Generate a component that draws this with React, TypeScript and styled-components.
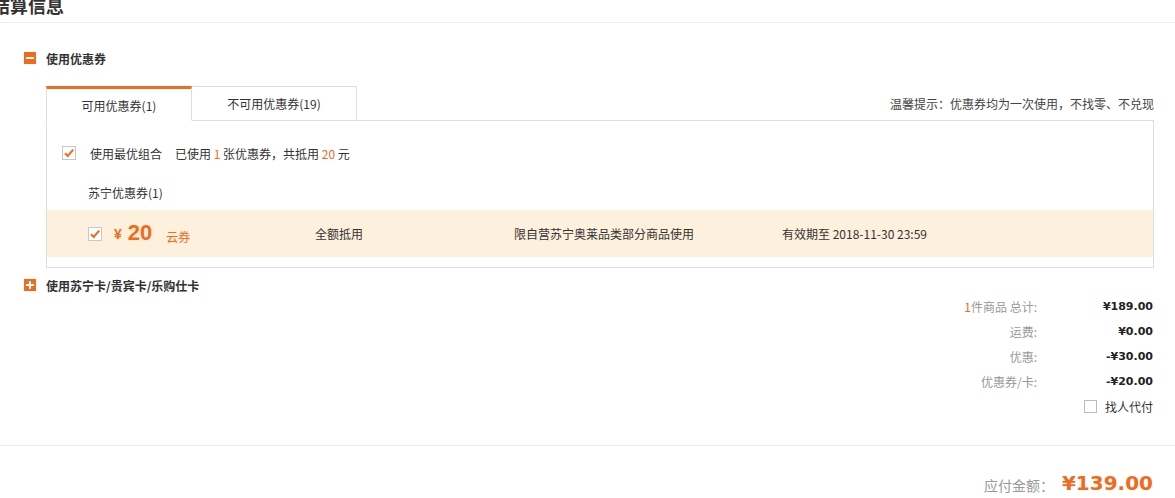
import React from "react";
import styled, { createGlobalStyle } from "styled-components";

const ORANGE = "#f26a1b";

const Global = createGlobalStyle`
  html, body { margin: 0; padding: 0; background: #fff; }
  body {
    font-family: "Noto Sans CJK SC", "Microsoft YaHei", "Noto Sans", sans-serif;
    font-size: 12px;
    color: #333;
  }
  * { box-sizing: border-box; }
`;

const Page = styled.div`
  width: 1175px;
  height: 498px;
  overflow: hidden;
  display: flex;
  flex-direction: column;
  & > * { flex-shrink: 0; }
`;

const Header = styled.div`
  height: 23px;
  border-bottom: 1px solid #ececec;
  overflow: hidden;
`;

const Title = styled.h2`
  margin: -7px 0 0 -8px;
  font-size: 18px;
  line-height: 24px;
  font-weight: 700;
  color: #333;
`;

const Section = styled.div`
  padding: 0 21px 0 24px;
  display: flex;
  flex-direction: column;
  & > * { flex-shrink: 0; }
`;

const Toggle = styled.div<{ $top: number }>`
  display: flex;
  align-items: center;
  gap: 10px;
  height: 14px;
  margin-top: ${(p) => p.$top}px;
  font-weight: 700;
  font-size: 12px;
  color: #333;
`;

const ToggleIcon = styled.span`
  width: 12px;
  height: 12px;
  background: ${ORANGE};
  display: inline-flex;
  align-items: center;
  justify-content: center;
`;

const Body = styled.div`
  margin-left: 22px;
  margin-top: 21px;
  display: flex;
  flex-direction: column;
  & > * { flex-shrink: 0; }
`;

const TabBar = styled.div`
  display: flex;
  align-items: stretch;
  height: 34px;
  position: relative;
  z-index: 1;
`;

const Tab = styled.div<{ $active?: boolean; $w: number }>`
  width: ${(p) => p.$w}px;
  display: flex;
  align-items: center;
  justify-content: center;
  font-size: 12px;
  color: #333;
  background: #fff;
  border: 1px solid #ddd;
  border-top: ${(p) => (p.$active ? `3px solid ${ORANGE}` : "1px solid #ddd")};
  border-bottom: ${(p) => (p.$active ? "1px solid #fff" : "1px solid #ddd")};
  border-left: ${(p) => (p.$active ? "1px solid #ddd" : "none")};
  margin-bottom: -1px;
  padding-top: ${(p) => (p.$active ? "1px" : "0")};
`;

const Hint = styled.div`
  margin-left: auto;
  align-self: center;
  color: #444;
  font-size: 12px;
  padding-top: 1px;
`;

const Panel = styled.div`
  border: 1px solid #ddd;
  padding: 0 0 10px;
  display: flex;
  flex-direction: column;
`;

const ComboRow = styled.div`
  display: flex;
  align-items: center;
  gap: 14px;
  height: 26px;
  margin-top: 19px;
  padding-left: 15px;
`;

const Muted = styled.span<{ $gap?: number }>`
  margin-left: ${(p) => p.$gap ?? 0}px;
`;

const Em = styled.span`
  color: ${ORANGE};
`;

const GroupTitle = styled.div`
  padding-left: 41px;
  line-height: 20px;
  margin: 17px 0 7px;
`;

const CouponRow = styled.div`
  background: #fdf0dc;
  height: 47px;
  display: grid;
  grid-template-columns: 227px 199px 268px 1fr;
  align-items: center;
  padding-left: 41px;
`;

const PriceCell = styled.div`
  display: flex;
  align-items: center;
`;

const Yen = styled.span`
  margin-left: 12px;
  color: ${ORANGE};
  font-size: 14px;
  font-weight: 700;
  font-family: "Liberation Sans", Arial, sans-serif;
`;

const Amount = styled.span`
  margin-left: 6px;
  margin-bottom: 2px;
  color: ${ORANGE};
  font-size: 22px;
  font-weight: 700;
  font-family: "Liberation Sans", Arial, sans-serif;
  line-height: 24px;
`;

const Kind = styled.span`
  margin-left: 14px;
  margin-top: 6px;
  color: ${ORANGE};
  font-size: 12px;
`;

const Summary = styled.div`
  margin-top: 2px;
  padding-right: 22px;
  display: flex;
  flex-direction: column;
  align-items: flex-end;
`;

const SumRow = styled.div`
  display: grid;
  grid-template-columns: auto 116px;
  height: 25px;
  align-items: center;
`;

const SumLabel = styled.span`
  text-align: right;
  color: #999;
  font-size: 12px;
`;

const SumValue = styled.span`
  text-align: right;
  font-family: "DejaVu Sans", Verdana, sans-serif;
  font-weight: 700;
  font-size: 11px;
  color: #222;
`;

const ProxyRow = styled.label`
  display: flex;
  align-items: center;
  gap: 8px;
  height: 25px;
  color: #333;
`;

const EmptyBox = styled.span`
  width: 13px;
  height: 13px;
  border: 1px solid #bbb;
  background: #fff;
`;

const Divider = styled.div`
  margin-top: 26px;
  border-top: 1px solid #ececec;
`;

const TotalRow = styled.div`
  display: flex;
  justify-content: flex-end;
  align-items: center;
  gap: 8px;
  padding-right: 22px;
  margin-top: 25px;
`;

const TotalLabel = styled.span`
  color: #999;
  font-size: 14px;
  padding-top: 4px;
`;

const TotalValue = styled.span`
  color: ${ORANGE};
  font-family: "DejaVu Sans", Verdana, sans-serif;
  font-weight: 700;
  font-size: 20px;
`;

const Check = () => (
  <svg width="14" height="14" viewBox="0 0 14 14">
    <rect x="0.5" y="0.5" width="13" height="13" fill="#fff" stroke="#c8c8c8" />
    <path d="M3 7.2 L5.8 10 L11.2 3.6" fill="none" stroke={ORANGE} strokeWidth="2" />
  </svg>
);

const Minus = () => (
  <ToggleIcon>
    <svg width="8" height="8" viewBox="0 0 8 8">
      <rect x="0" y="3" width="8" height="2" fill="#fff" />
    </svg>
  </ToggleIcon>
);

const Plus = () => (
  <ToggleIcon>
    <svg width="8" height="8" viewBox="0 0 8 8">
      <rect x="0" y="3" width="8" height="2" fill="#fff" />
      <rect x="3" y="0" width="2" height="8" fill="#fff" />
    </svg>
  </ToggleIcon>
);

export default function App() {
  return (
    <Page>
      <Global />
      <Header>
        <Title>结算信息</Title>
      </Header>
      <Section>
        <Toggle $top={28}>
          <Minus />
          <span>使用优惠券</span>
        </Toggle>
        <Body>
          <TabBar>
            <Tab $active $w={146}>可用优惠券(1)</Tab>
            <Tab $w={165}>不可用优惠券(19)</Tab>
            <Hint>温馨提示：优惠券均为一次使用，不找零、不兑现</Hint>
          </TabBar>
          <Panel>
            <ComboRow>
              <Check />
              <span>
                使用最优组合
                <Muted $gap={13}>
                  已使用 <Em>1</Em> 张优惠券，共抵用 <Em>20</Em> 元
                </Muted>
              </span>
            </ComboRow>
            <GroupTitle>苏宁优惠券(1)</GroupTitle>
            <CouponRow>
              <PriceCell>
                <Check />
                <Yen>¥</Yen>
                <Amount>20</Amount>
                <Kind>云券</Kind>
              </PriceCell>
              <span>全额抵用</span>
              <span>限自营苏宁奥莱品类部分商品使用</span>
              <span>有效期至 2018-11-30 23:59</span>
            </CouponRow>
          </Panel>
        </Body>
        <Toggle $top={10}>
          <Plus />
          <span>使用苏宁卡/贵宾卡/乐购仕卡</span>
        </Toggle>
      </Section>
      <Summary>
        <SumRow>
          <SumLabel>
            <Em>1</Em>件商品 总计:
          </SumLabel>
          <SumValue>¥189.00</SumValue>
        </SumRow>
        <SumRow>
          <SumLabel>运费:</SumLabel>
          <SumValue>¥0.00</SumValue>
        </SumRow>
        <SumRow>
          <SumLabel>优惠:</SumLabel>
          <SumValue>-¥30.00</SumValue>
        </SumRow>
        <SumRow>
          <SumLabel>优惠券/卡:</SumLabel>
          <SumValue>-¥20.00</SumValue>
        </SumRow>
        <ProxyRow>
          <EmptyBox />
          <span>找人代付</span>
        </ProxyRow>
      </Summary>
      <Divider />
      <TotalRow>
        <TotalLabel>应付金额：</TotalLabel>
        <TotalValue>¥139.00</TotalValue>
      </TotalRow>
    </Page>
  );
}
